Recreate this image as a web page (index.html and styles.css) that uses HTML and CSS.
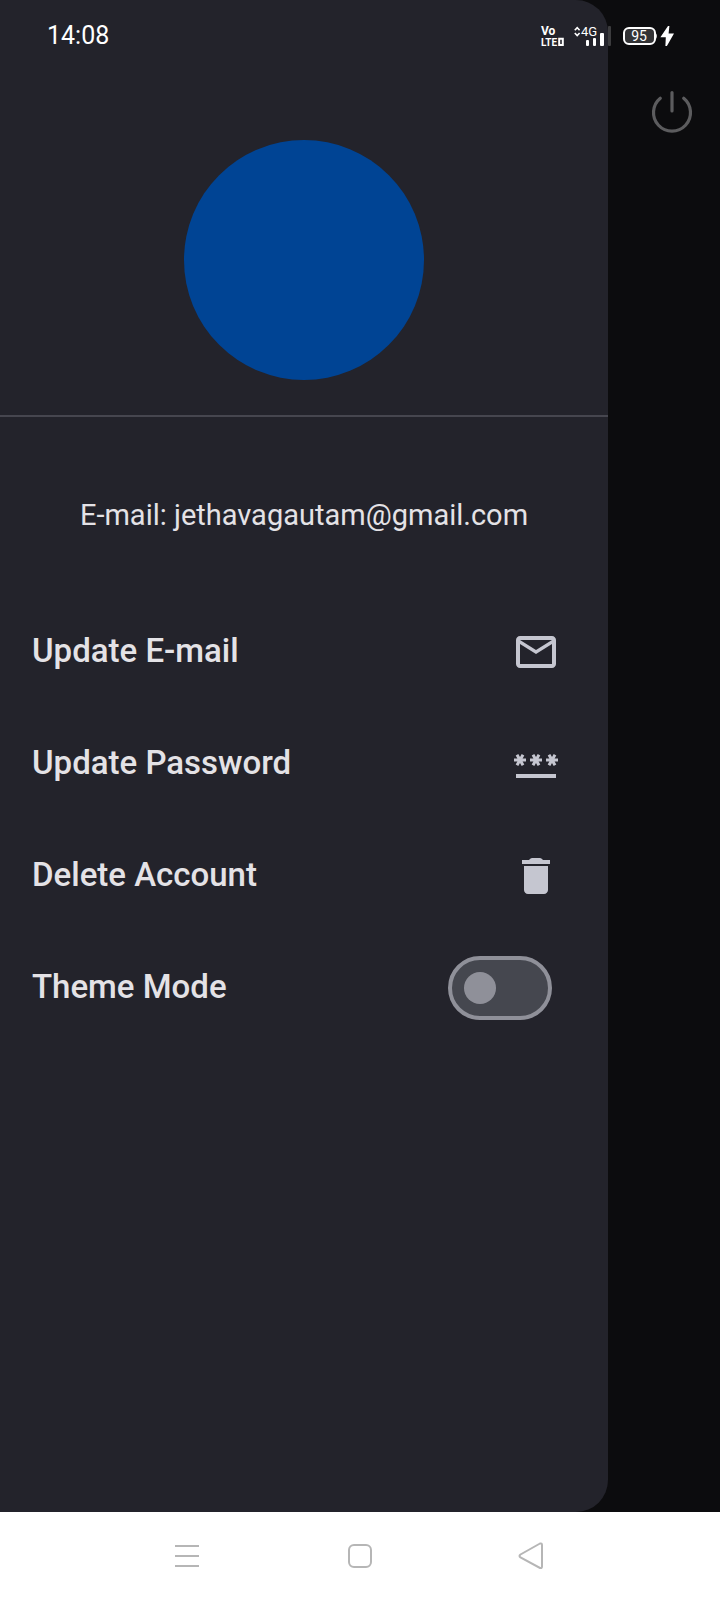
FILE: index.html
```html
<!DOCTYPE html>
<html lang="en">
<head>
<meta charset="utf-8">
<meta name="viewport" content="width=device-width, initial-scale=1">
<title>Account</title>
<link rel="stylesheet" href="styles.css">
</head>
<body>
<div class="screen">
  <header class="status">
    <time class="clock">14:08</time>
    <div class="indicators">
      <svg width="23" height="32" viewBox="0 -6 23 32" aria-label="VoLTE">
        <text class="tiny-bold" x="0" y="9" font-size="12">Vo</text>
        <text class="tiny-bold" x="0" y="20" font-size="10">LTE</text>
        <path d="M18.200 12.700h3.600v6.200h-3.600z" fill="none" stroke="#fff" stroke-width="2"/>
      </svg>
      <svg width="38" height="32" viewBox="0 -6 38 32" aria-label="4G signal">
        <path d="M.8 4.200 3.200 1.600l2.400 2.600M.8 7l2.400 2.600L5.600 7" fill="none" stroke="#fff" stroke-width="1.600"/>
        <text class="tiny" x="7" y="10" font-size="13">4G</text>
        <rect x="12" y="14" width="3" height="6" rx="1" fill="#fff"/>
        <rect x="19" y="12" width="3" height="8" rx="1" fill="#fff"/>
        <rect x="26" y="7" width="4" height="13" rx="1" fill="#fff"/>
        <rect x="34" y="0" width="3" height="20" rx="1" fill="#3c3c3e"/>
      </svg>
      <svg width="52" height="32" viewBox="0 -6 52 32" aria-label="Battery 95%, charging">
        <rect x="2" y="2" width="31" height="16" rx="5" fill="#333335" stroke="#fff" stroke-width="2"/>
        <path d="M33 6.500c2.400 1 2.400 6 0 7z" fill="#fff"/>
        <text class="tiny" x="17" y="15" font-size="14" text-anchor="middle">95</text>
        <path d="M46 0 38.400 11.200h5.400L43.400 20h1.500l7.100-12.400h-5.400L47.400 0z" fill="#fff"/>
      </svg>
    </div>
  </header>

  <div class="stage">
    <aside class="drawer">
      <div class="profile"><div class="avatar"></div></div>
      <p class="email">E-mail: jethavagautam@gmail.com</p>
      <div class="menu">
        <button class="row" type="button">
          <span>Update E-mail</span>
          <svg class="icon" viewBox="0 0 24 24"><path d="M22 6c0-1.100-.9-2-2-2H4c-1.100 0-2 .9-2 2v12c0 1.100.9 2 2 2h16c1.100 0 2-.9 2-2V6zm-2 0-8 5-8-5h16zm0 12H4V8l8 5 8-5v10z"/></svg>
        </button>
        <button class="row" type="button">
          <span>Update Password</span>
          <svg class="icon" viewBox="0 0 24 24"><path d="M2 17h20v2H2z"/><path id="star" d="M3.150 12.950 4 11.470l.85 1.480 1.300-.75-.85-1.480H7v-1.500H5.300l.85-1.470L4.850 7 4 8.470 3.150 7l-1.300.75.85 1.470H1v1.500h1.700l-.85 1.480z"/><use href="#star" x="8"/><use href="#star" x="16"/></svg>
        </button>
        <button class="row" type="button">
          <span>Delete Account</span>
          <svg class="icon" viewBox="0 0 24 24"><path d="M6 19c0 1.100.9 2 2 2h8c1.100 0 2-.9 2-2V7H6v12zM19 4h-3.500l-.5-.5c-.3-.3-.7-.5-1.100-.5h-3.800c-.4 0-.8.2-1.100.5l-.5.5H5v2h14z"/></svg>
        </button>
        <label class="row" for="theme">
          <span>Theme Mode</span>
          <input class="switch" id="theme" type="checkbox" role="switch">
        </label>
      </div>
    </aside>
    <main class="backdrop">
      <button class="power" type="button" aria-label="Log out">
        <svg width="48" height="48" viewBox="0 0 48 48"><path d="M24 4.500v18.500M12.300 10.300a18.500 18.500 0 1 0 23.400 0" fill="none" stroke="#5c5c5e" stroke-width="3.200" stroke-linecap="round"/></svg>
      </button>
    </main>
  </div>

  <nav class="navbar">
    <button type="button" aria-label="Recent apps"><svg width="32" height="32" viewBox="0 0 32 32"><path d="M4 6h24M4 16h24M4 26h24"/></svg></button>
    <button type="button" aria-label="Home"><svg width="32" height="32" viewBox="0 0 32 32"><rect x="5" y="5" width="22" height="22" rx="5"/></svg></button>
    <button type="button" aria-label="Back"><svg width="32" height="32" viewBox="0 0 32 32"><path d="M23 3.500 3.500 14.500Q1.500 16 3.500 17.500L23 28Q25 28.500 25 26.500V5Q25 3 23 3.500z"/></svg></button>
  </nav>
</div>
</body>
</html>
```
FILE: styles.css
```css
* {
  box-sizing: border-box;
}

body {
  margin: 0;
  font-family: Roboto, "Noto Sans", sans-serif;
  background: #0c0c0e;
}

button {
  margin: 0;
  padding: 0;
  border: 0;
  background: none;
  font: inherit;
  color: inherit;
}

svg {
  display: block;
}

.screen {
  position: relative;
  display: flex;
  flex-direction: column;
  min-height: 100vh;
}

.status {
  position: absolute;
  top: 0;
  left: 0;
  right: 0;
  display: flex;
  align-items: center;
  justify-content: space-between;
  height: 72px;
  padding: 0 46px 0 47px;
  color: #fff;
}

.clock {
  font-size: 25px;
  line-height: 32px;
}

.indicators {
  display: flex;
  gap: 10px;
}

.indicators svg {
  overflow: visible;
}

.tiny,
.tiny-bold {
  fill: #fff;
}

.tiny-bold {
  font-weight: 700;
}

.stage {
  flex: 1;
  display: flex;
}

.drawer {
  flex: 1;
  background: #23232b;
  border-radius: 0 32px 32px 0;
  color: #e4e2e6;
}

.profile {
  display: flex;
  justify-content: center;
  padding: 140px 32px 35px;
  border-bottom: 2px solid #46464f;
}

.avatar {
  width: 240px;
  height: 240px;
  border-radius: 50%;
  background: #004494;
}

.email {
  margin: 0;
  padding: 78px 32px 61px;
  font-size: 29px;
  line-height: 40px;
  text-align: center;
}

.row {
  display: flex;
  align-items: center;
  justify-content: space-between;
  width: 100%;
  height: 112px;
  padding: 0 48px 0 32px;
  font-size: 33px;
  font-weight: 500;
  line-height: 48px;
  text-align: left;
}

.row span {
  padding-bottom: 2px;
}

.icon {
  width: 48px;
  height: 48px;
  fill: #c5c6d0;
}

.switch {
  appearance: none;
  display: flex;
  align-items: center;
  width: 104px;
  height: 64px;
  margin: 0 8px 0 0;
  padding: 0 12px;
  border: 4px solid #8f9099;
  border-radius: 32px;
  background: #45474f;
}

.switch::before {
  content: "";
  width: 32px;
  height: 32px;
  border-radius: 50%;
  background: #8f9099;
}

.switch:checked {
  justify-content: flex-end;
}

.backdrop {
  display: flex;
  justify-content: flex-end;
  align-items: flex-start;
  width: 112px;
  padding: 88px 24px 0;
}

.navbar {
  display: grid;
  grid-template-columns: repeat(3, 1fr);
  height: 88px;
  padding: 0 14%;
  background: #fff;
}

.navbar button {
  display: flex;
  align-items: center;
  justify-content: center;
}

.navbar svg {
  fill: none;
  stroke: #b6b6b6;
  stroke-width: 2;
}
```
